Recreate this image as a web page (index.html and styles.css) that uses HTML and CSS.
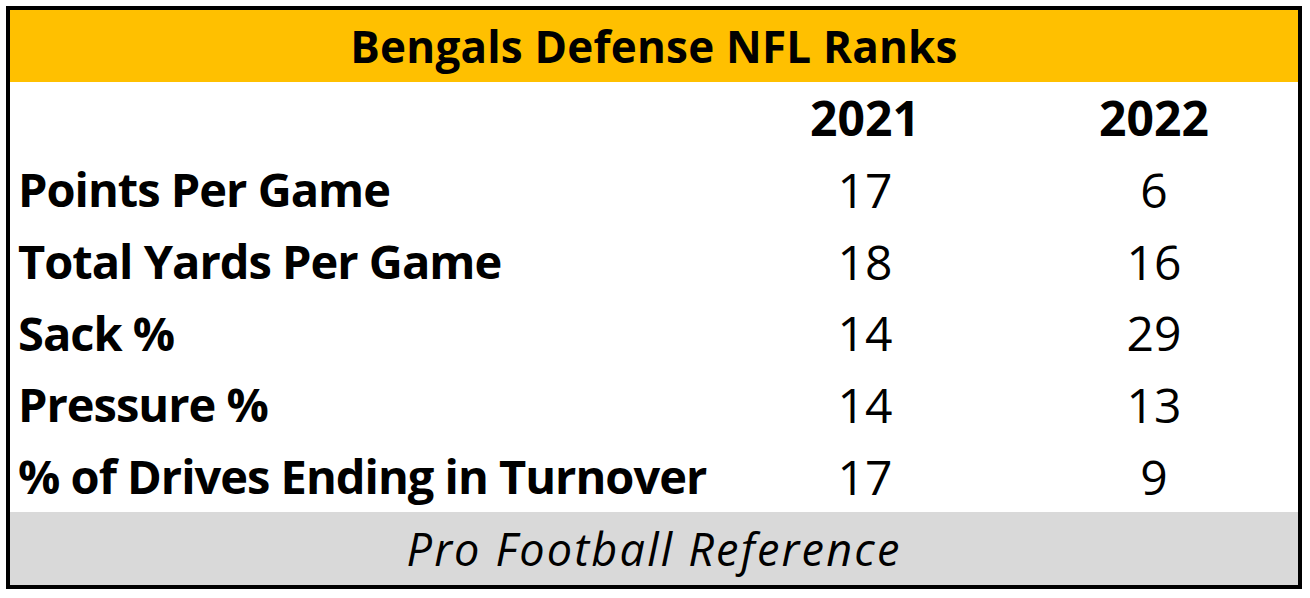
FILE: index.html
```html
<!DOCTYPE html>
<html>
<head>
<meta charset="utf-8">
<link rel="stylesheet" href="styles.css">
</head>
<body>
<div class="table">
  <div class="title">Bengals Defense NFL Ranks</div>
  <div class="grid">
    <div class="cell label"></div>
    <div class="cell year">2021</div>
    <div class="cell year">2022</div>
    <div class="cell label">Points Per Game</div>
    <div class="cell num">17</div>
    <div class="cell num">6</div>
    <div class="cell label">Total Yards Per Game</div>
    <div class="cell num">18</div>
    <div class="cell num">16</div>
    <div class="cell label">Sack %</div>
    <div class="cell num">14</div>
    <div class="cell num">29</div>
    <div class="cell label">Pressure %</div>
    <div class="cell num">14</div>
    <div class="cell num">13</div>
    <div class="cell label">% of Drives Ending in Turnover</div>
    <div class="cell num">17</div>
    <div class="cell num">9</div>
  </div>
  <div class="source">Pro Football Reference</div>
</div>
</body>
</html>
```
FILE: styles.css
```css
html, body {
  margin: 0;
  padding: 0;
  background: #ffffff;
}
body {
  padding: 6px 8px 0 6px;
  font-family: "Open Sans", "Liberation Sans", sans-serif;
  color: #000;
}
.table {
  width: 1288px;
  border: 4px solid #000;
  display: flex;
  flex-direction: column;
}
.title {
  height: 72px;
  background: #ffc000;
  display: flex;
  align-items: center;
  justify-content: center;
  font-weight: 700;
  font-size: 44px;
  letter-spacing: 0.2px;
}
.grid {
  display: grid;
  grid-template-columns: 710px 290px 1fr;
  grid-template-rows: repeat(6, 71.67px);
  background: #fff;
}
.cell {
  display: flex;
  align-items: center;
}
.label {
  padding-left: 8px;
  font-weight: 700;
  font-size: 47px;
  letter-spacing: -1px;
}
.year {
  justify-content: center;
  font-weight: 700;
  font-size: 48px;
}
.num {
  justify-content: center;
  font-size: 48px;
}
.source {
  height: 73px;
  background: #d9d9d9;
  display: flex;
  align-items: center;
  justify-content: center;
  font-style: italic;
  font-size: 45px;
  letter-spacing: 2.2px;
}
```
